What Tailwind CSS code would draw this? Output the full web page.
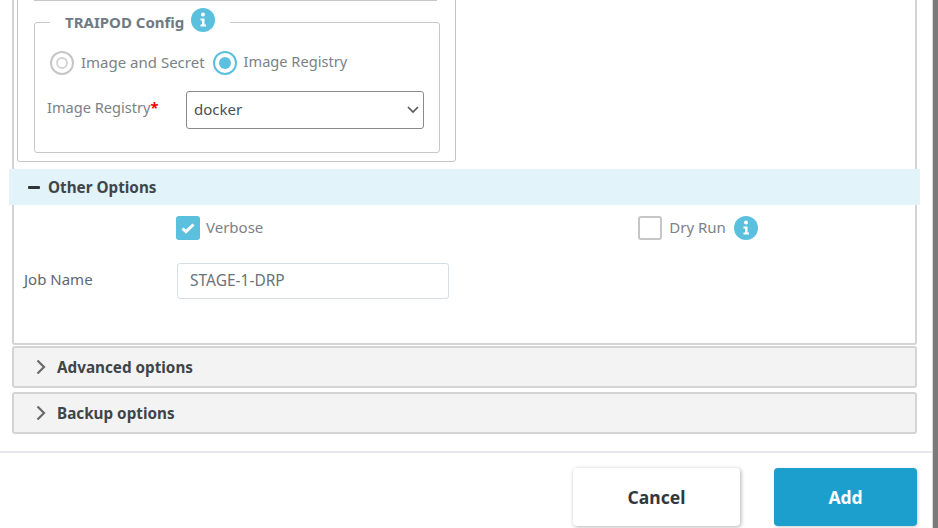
<!DOCTYPE html>
<html lang="en">
  <head>
    <meta charset="UTF-8" />
    <title>Add job</title>
    <script src="https://cdn.jsdelivr.net/npm/@tailwindcss/browser@4"></script>
  </head>
  <body class="bg-white font-['Noto_Sans','Open_Sans',sans-serif] overflow-hidden">
    <div class="flex h-[528px] w-[938px] overflow-hidden">
      <div class="flex w-[932px] flex-col">
        <!-- form sections -->
        <div class="mx-[12px] -mt-[30px] w-[905px]">
          <div class="h-[375px] rounded-b-[3px] border-2 border-[#d4d4d4] px-[3px]">
            <div class="h-[190px] w-[439px] rounded-b-[3px] border border-[#c4c4c4] px-[16px]">
              <div class="mt-[27px] h-px w-[403px] bg-[#c8c8c8]"></div>
              <fieldset class="mt-[9px] h-[143px] w-[406px] rounded-[3px] border border-[#c8c8c8]">
                <legend class="ml-[15px] flex items-center px-[15px] text-[15px] leading-[24px] font-bold text-[#6f7a82]">
                  TRAIPOD Config
                  <svg class="-mt-[4px] ml-[7px] size-[24px]" viewBox="0 0 24 24"><circle cx="12" cy="12" r="12" fill="#5bc0de" /><circle cx="12" cy="6.5" r="2" fill="#fff" /><path d="M9.5 10.5h4v6h1.5v2H9.5v-2H11v-4H9.5z" fill="#fff" /></svg>
                </legend>
                <div class="mt-[17px] flex items-center pl-[15px] text-[15px] text-[#7a8288]">
                  <span class="flex size-[24px] items-center justify-center rounded-full border-2 border-[#c6c6c6]"><span class="size-[12px] rounded-full border-2 border-[#d4d4d4]"></span></span>
                  <span class="ml-[7px] pb-[2px]">Image and Secret</span>
                  <span class="ml-[8px] flex size-[24px] items-center justify-center rounded-full border-2 border-[#5bc0de]"><span class="size-[12px] rounded-full bg-[#5bc0de]"></span></span>
                  <span class="ml-[7px] pb-[2px] text-[14.6px]">Image Registry</span>
                </div>
                <div class="mt-[15px] flex items-start pl-[12px] text-[14.6px] text-[#7a8288]">
                  <label class="w-[139px] leading-[32px]">Image Registry<span class="font-bold text-[#f00]">*</span></label>
                  <div class="relative h-[38px] w-[238px]">
                    <select class="h-[38px] w-[238px] appearance-none rounded-[3px] border border-[#8a8a8a] bg-white pl-[7px] text-[15px] text-[#4a4f54]">
                      <option>docker</option>
                    </select>
                    <svg class="absolute top-[13px] right-[5px] size-[12px]" viewBox="0 0 12 12"><path d="M1 3l5 5 5-5" fill="none" stroke="#555b60" stroke-width="1.7" /></svg>
                  </div>
                </div>
              </fieldset>
            </div>
            <div class="-ml-[8px] mt-[7px] flex h-[36px] w-[911px] items-center bg-[#e2f3fa] pl-[19px] text-[15.25px] font-bold text-[#3f4549]">
              <span class="h-[3px] w-[12px] rounded-[1px] bg-[#2f3437]"></span>
              <span class="ml-[8px]">Other Options</span>
            </div>
            <div class="mt-[11px] flex h-[24px] items-center text-[15px] text-[#7a8288]">
              <span class="ml-[159px] flex size-[24px] items-center justify-center rounded-[3px] bg-[#5bc0de]">
                <svg class="size-[16px]" viewBox="0 0 16 16"><path d="M2.5 8.5l3.5 3.2L13.5 4.5" fill="none" stroke="#fff" stroke-width="3" /></svg>
              </span>
              <span class="ml-[6px] pb-[2px]">Verbose</span>
              <span class="ml-[375px] size-[24px] rounded-[3px] border-2 border-[#c6c6c6]"></span>
              <span class="ml-[7px] pb-[2px]">Dry Run</span>
              <svg class="ml-[8px] size-[24px]" viewBox="0 0 24 24"><circle cx="12" cy="12" r="12" fill="#5bc0de" /><circle cx="12" cy="6.5" r="2" fill="#fff" /><path d="M9.5 10.5h4v6h1.5v2H9.5v-2H11v-4H9.5z" fill="#fff" /></svg>
            </div>
            <div class="mt-[23px] flex items-center text-[15px] text-[#5f676d]">
              <label class="ml-[7px] w-[153px] pb-[3px]">Job Name</label>
              <input class="h-[36px] w-[272px] rounded-[3px] border border-[#d6dde3] px-[12px] pb-[2px] text-[15.5px] text-[#6b7278]" value="STAGE-1-DRP" />
            </div>
          </div>
          <div class="mt-[1px] flex h-[42px] items-center rounded-[3px] border-2 border-[#d4d4d4] bg-[#f3f3f3] pl-[20px] text-[15.25px] font-bold text-[#3f4549]">
            <svg class="size-[14px]" viewBox="0 0 14 14"><path d="M3.5 0.5l6.5 6.5-6.5 6.5" fill="none" stroke="#6a6a6a" stroke-width="2.2" /></svg>
            <span class="ml-[9px]">Advanced options</span>
          </div>
          <div class="mt-[4px] flex h-[42px] items-center rounded-[3px] border-2 border-[#d4d4d4] bg-[#f3f3f3] pl-[20px] text-[15.25px] font-bold text-[#3f4549]">
            <svg class="size-[14px]" viewBox="0 0 14 14"><path d="M3.5 0.5l6.5 6.5-6.5 6.5" fill="none" stroke="#6a6a6a" stroke-width="2.2" /></svg>
            <span class="ml-[9px]">Backup options</span>
          </div>
        </div>
        <!-- footer -->
        <div class="mt-[17px] flex flex-1 justify-end gap-[34px] border-t-2 border-[#e6e8ec] pt-[15px] pr-[15px]">
          <button class="h-[58px] w-[167px] rounded-[4px] bg-white pt-px text-[17.5px] font-bold text-[#33383c] shadow-[1px_1px_4px_rgba(0,0,0,0.3)]">Cancel</button>
          <button class="h-[58px] w-[143px] rounded-[4px] bg-[#1c9fcc] pt-px text-[17.5px] font-bold text-white shadow-[1px_1px_3px_rgba(0,0,0,0.2)]">Add</button>
        </div>
      </div>
      <div class="w-px bg-[#d8d8d8]"></div>
      <div class="w-[5px] bg-[#7a7a7a]"></div>
    </div>
  </body>
</html>
